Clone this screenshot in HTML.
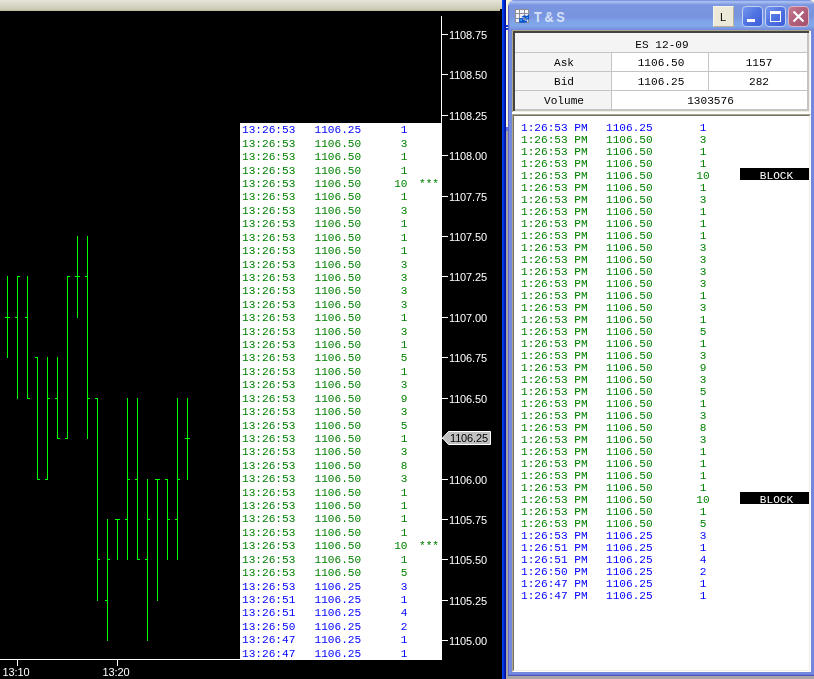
<!DOCTYPE html>
<html><head><meta charset="utf-8"><title>T &amp; S</title>
<style>
html,body{margin:0;padding:0}
body{width:814px;height:679px;position:relative;overflow:hidden;background:#000;font-family:"Liberation Sans",sans-serif}
div,span{position:absolute;box-sizing:border-box}
.m{font-family:"Liberation Mono",monospace;font-size:11.11px;white-space:pre;letter-spacing:0}
.m,.ax,.t{will-change:transform}
.b{color:#0000ff}.g{color:#008000}.k{color:#000}
.ax{font-family:"Liberation Sans",sans-serif;font-size:11px;color:#fff;white-space:pre;line-height:12px;height:12px;letter-spacing:-0.15px}
.lr{left:0;width:202px;height:14px;line-height:14px}
.rr{left:0;width:296px;height:12px;line-height:12px}
.blk{background:#000;color:#fff;left:227px;width:69px;height:12px;top:0;text-align:center;line-height:16px;padding-left:4px;overflow:hidden}
</style></head><body>

<div style="left:0;top:0;width:502px;height:11px;background:linear-gradient(#e6e4d9 0,#e2dfd2 2px,#d9d6c6 5px,#cfccb8 8px,#c9c6ae 10px,#b6b28c 11px)"></div>
<div style="left:500px;top:9px;width:2px;height:2px;background:#000"></div>
<div style="left:240px;top:123px;width:202px;height:537px;background:#fff">
<div class="lr m b" style="top:0px"><span style="left:2px">13:26:53</span><span style="left:74.5px">1106.25</span><span style="right:34.5px">1</span></div>
<div class="lr m g" style="top:14px"><span style="left:2px">13:26:53</span><span style="left:74.5px">1106.50</span><span style="right:34.5px">3</span></div>
<div class="lr m g" style="top:27px"><span style="left:2px">13:26:53</span><span style="left:74.5px">1106.50</span><span style="right:34.5px">1</span></div>
<div class="lr m g" style="top:41px"><span style="left:2px">13:26:53</span><span style="left:74.5px">1106.50</span><span style="right:34.5px">1</span></div>
<div class="lr m g" style="top:54px"><span style="left:2px">13:26:53</span><span style="left:74.5px">1106.50</span><span style="right:34.5px">10</span><span style="left:179px">***</span></div>
<div class="lr m g" style="top:67px"><span style="left:2px">13:26:53</span><span style="left:74.5px">1106.50</span><span style="right:34.5px">1</span></div>
<div class="lr m g" style="top:81px"><span style="left:2px">13:26:53</span><span style="left:74.5px">1106.50</span><span style="right:34.5px">3</span></div>
<div class="lr m g" style="top:94px"><span style="left:2px">13:26:53</span><span style="left:74.5px">1106.50</span><span style="right:34.5px">1</span></div>
<div class="lr m g" style="top:108px"><span style="left:2px">13:26:53</span><span style="left:74.5px">1106.50</span><span style="right:34.5px">1</span></div>
<div class="lr m g" style="top:121px"><span style="left:2px">13:26:53</span><span style="left:74.5px">1106.50</span><span style="right:34.5px">1</span></div>
<div class="lr m g" style="top:135px"><span style="left:2px">13:26:53</span><span style="left:74.5px">1106.50</span><span style="right:34.5px">3</span></div>
<div class="lr m g" style="top:148px"><span style="left:2px">13:26:53</span><span style="left:74.5px">1106.50</span><span style="right:34.5px">3</span></div>
<div class="lr m g" style="top:161px"><span style="left:2px">13:26:53</span><span style="left:74.5px">1106.50</span><span style="right:34.5px">3</span></div>
<div class="lr m g" style="top:175px"><span style="left:2px">13:26:53</span><span style="left:74.5px">1106.50</span><span style="right:34.5px">3</span></div>
<div class="lr m g" style="top:188px"><span style="left:2px">13:26:53</span><span style="left:74.5px">1106.50</span><span style="right:34.5px">1</span></div>
<div class="lr m g" style="top:202px"><span style="left:2px">13:26:53</span><span style="left:74.5px">1106.50</span><span style="right:34.5px">3</span></div>
<div class="lr m g" style="top:215px"><span style="left:2px">13:26:53</span><span style="left:74.5px">1106.50</span><span style="right:34.5px">1</span></div>
<div class="lr m g" style="top:228px"><span style="left:2px">13:26:53</span><span style="left:74.5px">1106.50</span><span style="right:34.5px">5</span></div>
<div class="lr m g" style="top:242px"><span style="left:2px">13:26:53</span><span style="left:74.5px">1106.50</span><span style="right:34.5px">1</span></div>
<div class="lr m g" style="top:255px"><span style="left:2px">13:26:53</span><span style="left:74.5px">1106.50</span><span style="right:34.5px">3</span></div>
<div class="lr m g" style="top:269px"><span style="left:2px">13:26:53</span><span style="left:74.5px">1106.50</span><span style="right:34.5px">9</span></div>
<div class="lr m g" style="top:282px"><span style="left:2px">13:26:53</span><span style="left:74.5px">1106.50</span><span style="right:34.5px">3</span></div>
<div class="lr m g" style="top:296px"><span style="left:2px">13:26:53</span><span style="left:74.5px">1106.50</span><span style="right:34.5px">5</span></div>
<div class="lr m g" style="top:309px"><span style="left:2px">13:26:53</span><span style="left:74.5px">1106.50</span><span style="right:34.5px">1</span></div>
<div class="lr m g" style="top:322px"><span style="left:2px">13:26:53</span><span style="left:74.5px">1106.50</span><span style="right:34.5px">3</span></div>
<div class="lr m g" style="top:336px"><span style="left:2px">13:26:53</span><span style="left:74.5px">1106.50</span><span style="right:34.5px">8</span></div>
<div class="lr m g" style="top:349px"><span style="left:2px">13:26:53</span><span style="left:74.5px">1106.50</span><span style="right:34.5px">3</span></div>
<div class="lr m g" style="top:363px"><span style="left:2px">13:26:53</span><span style="left:74.5px">1106.50</span><span style="right:34.5px">1</span></div>
<div class="lr m g" style="top:376px"><span style="left:2px">13:26:53</span><span style="left:74.5px">1106.50</span><span style="right:34.5px">1</span></div>
<div class="lr m g" style="top:389px"><span style="left:2px">13:26:53</span><span style="left:74.5px">1106.50</span><span style="right:34.5px">1</span></div>
<div class="lr m g" style="top:403px"><span style="left:2px">13:26:53</span><span style="left:74.5px">1106.50</span><span style="right:34.5px">1</span></div>
<div class="lr m g" style="top:416px"><span style="left:2px">13:26:53</span><span style="left:74.5px">1106.50</span><span style="right:34.5px">10</span><span style="left:179px">***</span></div>
<div class="lr m g" style="top:430px"><span style="left:2px">13:26:53</span><span style="left:74.5px">1106.50</span><span style="right:34.5px">1</span></div>
<div class="lr m g" style="top:443px"><span style="left:2px">13:26:53</span><span style="left:74.5px">1106.50</span><span style="right:34.5px">5</span></div>
<div class="lr m b" style="top:457px"><span style="left:2px">13:26:53</span><span style="left:74.5px">1106.25</span><span style="right:34.5px">3</span></div>
<div class="lr m b" style="top:470px"><span style="left:2px">13:26:51</span><span style="left:74.5px">1106.25</span><span style="right:34.5px">1</span></div>
<div class="lr m b" style="top:483px"><span style="left:2px">13:26:51</span><span style="left:74.5px">1106.25</span><span style="right:34.5px">4</span></div>
<div class="lr m b" style="top:497px"><span style="left:2px">13:26:50</span><span style="left:74.5px">1106.25</span><span style="right:34.5px">2</span></div>
<div class="lr m b" style="top:510px"><span style="left:2px">13:26:47</span><span style="left:74.5px">1106.25</span><span style="right:34.5px">1</span></div>
<div class="lr m b" style="top:524px"><span style="left:2px">13:26:47</span><span style="left:74.5px">1106.25</span><span style="right:34.5px">1</span></div>
</div>
<div style="left:441px;top:16px;width:1px;height:644px;background:#fff"></div>
<div style="left:0;top:659px;width:442px;height:1px;background:#fff"></div>
<div style="left:17px;top:659px;width:1px;height:7px;background:#fff"></div>
<div class="ax" style="left:-4px;top:666px;width:40px;text-align:center">13:10</div>
<div style="left:117px;top:659px;width:1px;height:7px;background:#fff"></div>
<div class="ax" style="left:96px;top:666px;width:40px;text-align:center">13:20</div>
<div style="left:442px;top:34px;width:6px;height:1px;background:#fff"></div>
<div class="ax" style="left:449px;top:29px">1108.75</div>
<div style="left:442px;top:74px;width:6px;height:1px;background:#fff"></div>
<div class="ax" style="left:449px;top:69px">1108.50</div>
<div style="left:442px;top:115px;width:6px;height:1px;background:#fff"></div>
<div class="ax" style="left:449px;top:110px">1108.25</div>
<div style="left:442px;top:155px;width:6px;height:1px;background:#fff"></div>
<div class="ax" style="left:449px;top:150px">1108.00</div>
<div style="left:442px;top:196px;width:6px;height:1px;background:#fff"></div>
<div class="ax" style="left:449px;top:191px">1107.75</div>
<div style="left:442px;top:236px;width:6px;height:1px;background:#fff"></div>
<div class="ax" style="left:449px;top:231px">1107.50</div>
<div style="left:442px;top:276px;width:6px;height:1px;background:#fff"></div>
<div class="ax" style="left:449px;top:271px">1107.25</div>
<div style="left:442px;top:317px;width:6px;height:1px;background:#fff"></div>
<div class="ax" style="left:449px;top:312px">1107.00</div>
<div style="left:442px;top:357px;width:6px;height:1px;background:#fff"></div>
<div class="ax" style="left:449px;top:352px">1106.75</div>
<div style="left:442px;top:398px;width:6px;height:1px;background:#fff"></div>
<div class="ax" style="left:449px;top:393px">1106.50</div>
<div style="left:442px;top:438px;width:6px;height:1px;background:#fff"></div>
<div style="left:442px;top:479px;width:6px;height:1px;background:#fff"></div>
<div class="ax" style="left:449px;top:474px">1106.00</div>
<div style="left:442px;top:519px;width:6px;height:1px;background:#fff"></div>
<div class="ax" style="left:449px;top:514px">1105.75</div>
<div style="left:442px;top:559px;width:6px;height:1px;background:#fff"></div>
<div class="ax" style="left:449px;top:554px">1105.50</div>
<div style="left:442px;top:600px;width:6px;height:1px;background:#fff"></div>
<div class="ax" style="left:449px;top:595px">1105.25</div>
<div style="left:442px;top:640px;width:6px;height:1px;background:#fff"></div>
<div class="ax" style="left:449px;top:635px">1105.00</div>
<svg style="position:absolute;left:441px;top:430px" width="52" height="17" viewBox="0 0 52 17"><path d="M1.5 8 L7.5 1.5 H49.5 V14.5 H7.5 Z" fill="#c0c0c0" stroke="#fff" stroke-width="1"/></svg>
<div class="ax" style="left:450px;top:432px;color:#000">1106.25</div>
<svg style="position:absolute;left:0;top:0" width="240" height="660" shape-rendering="crispEdges" fill="#00ff00">
<rect x="7" y="276" width="1" height="82"/><rect x="5" y="317" width="2" height="1"/><rect x="8" y="317" width="2" height="1"/>
<rect x="17" y="276" width="1" height="123"/><rect x="15" y="317" width="2" height="1"/><rect x="18" y="276" width="2" height="1"/>
<rect x="27" y="276" width="1" height="123"/><rect x="25" y="317" width="2" height="1"/><rect x="28" y="398" width="2" height="1"/>
<rect x="37" y="357" width="1" height="123"/><rect x="35" y="357" width="2" height="1"/><rect x="38" y="479" width="2" height="1"/>
<rect x="47" y="357" width="1" height="123"/><rect x="45" y="479" width="2" height="1"/><rect x="48" y="398" width="2" height="1"/>
<rect x="57" y="357" width="1" height="82"/><rect x="55" y="398" width="2" height="1"/><rect x="58" y="438" width="2" height="1"/>
<rect x="67" y="276" width="1" height="163"/><rect x="65" y="438" width="2" height="1"/><rect x="68" y="276" width="2" height="1"/>
<rect x="77" y="236" width="1" height="82"/><rect x="75" y="276" width="2" height="1"/><rect x="78" y="276" width="2" height="1"/>
<rect x="87" y="236" width="1" height="203"/><rect x="85" y="276" width="2" height="1"/><rect x="88" y="398" width="2" height="1"/>
<rect x="97" y="398" width="1" height="203"/><rect x="95" y="398" width="2" height="1"/><rect x="98" y="559" width="2" height="1"/>
<rect x="107" y="519" width="1" height="122"/><rect x="105" y="600" width="2" height="1"/><rect x="108" y="559" width="2" height="1"/>
<rect x="117" y="519" width="1" height="41"/><rect x="115" y="519" width="2" height="1"/><rect x="118" y="519" width="2" height="1"/>
<rect x="127" y="398" width="1" height="162"/><rect x="125" y="519" width="2" height="1"/><rect x="128" y="479" width="2" height="1"/>
<rect x="137" y="398" width="1" height="162"/><rect x="135" y="479" width="2" height="1"/><rect x="138" y="559" width="2" height="1"/>
<rect x="147" y="479" width="1" height="162"/><rect x="145" y="559" width="2" height="1"/><rect x="148" y="519" width="2" height="1"/>
<rect x="157" y="479" width="1" height="122"/><rect x="155" y="479" width="2" height="1"/><rect x="158" y="479" width="2" height="1"/>
<rect x="167" y="479" width="1" height="81"/><rect x="165" y="479" width="2" height="1"/><rect x="168" y="519" width="2" height="1"/>
<rect x="177" y="398" width="1" height="162"/><rect x="175" y="519" width="2" height="1"/><rect x="178" y="479" width="2" height="1"/>
<rect x="187" y="398" width="1" height="82"/><rect x="185" y="438" width="2" height="1"/><rect x="188" y="438" width="2" height="1"/>
</svg>
<div style="left:502px;top:0;width:4px;height:679px;background:linear-gradient(90deg,#0046f5 0,#0040ee 1px,#0028cc 2px,#0014a8 3px,#000c90 4px)"></div>
<div style="left:506px;top:0;width:2px;height:679px;background:#a9a79e"></div>
<div style="left:506px;top:0;width:2px;height:127px;background:#fdf7d9"></div>
<div style="left:506px;top:25px;width:2px;height:2px;background:#0a3cd8"></div>
<div style="left:506px;top:28px;width:2px;height:2px;background:#0a3cd8"></div>
<div style="left:506px;top:127px;width:2px;height:4px;background:#6070d8"></div>
<div style="left:506px;top:676px;width:308px;height:3px;background:#a7a7a7"></div>
<div style="left:508px;top:0;width:306px;height:8px;background:#f3eed6"></div>
<div style="left:508px;top:0;width:306px;height:679px;overflow:hidden">
<div id="win" style="left:0;top:0;width:307px;height:676px;background:#7288dd;border-radius:7px 7px 0 0;overflow:hidden">
<div style="left:0;top:0;width:310px;height:30px;background:linear-gradient(#7089de 0,#8fa8e8 1px,#a4bbf0 1.5px,#a2b9ef 2.5px,#86a0e5 4px,#7b96e0 5.5px,#7994df 17px,#7d9fe6 20px,#80a6ea 23px,#80a7ea 26px,#7c98e2 28px,#7489dc 30px)"></div>
<div style="left:0;top:6px;width:1px;height:670px;background:#5a68d2"></div>
<div style="left:1px;top:6px;width:1px;height:670px;background:#7a8be0"></div>
<div style="left:0;top:675px;width:310px;height:1px;background:#4c56c0"></div>
<div style="left:0;top:674px;width:310px;height:1px;background:#6a7cd8"></div>
<svg style="position:absolute;left:7px;top:9px" width="14" height="14" viewBox="0 0 14 14" shape-rendering="crispEdges">
<rect x="0" y="0" width="14" height="14" fill="#8f8f8f"/>
<rect x="1" y="1" width="3" height="3" fill="#f6f6ff"/><rect x="5" y="1" width="4" height="3" fill="#f0f0ff"/><rect x="10" y="1" width="3" height="3" fill="#f6f6ff"/>
<rect x="1" y="5" width="3" height="4" fill="#f0f0ff"/><rect x="5" y="5" width="4" height="4" fill="#f0f0ff"/><rect x="10" y="5" width="3" height="4" fill="#f0f0ff"/>
<rect x="1" y="10" width="3" height="3" fill="#f0f0ff"/><rect x="5" y="10" width="4" height="3" fill="#f0f0ff"/><rect x="10" y="10" width="3" height="3" fill="#f0f0ff"/>
<g shape-rendering="auto"><path d="M4.2 9.2 H8.9 L8.3 10.5 C9.4 11.7 11 11.9 12.1 11.3 L12.3 13 C10 13.9 8 13.8 4.2 13.8 Z" fill="#0a55d8"/>
<path d="M6.2 8.3 C7.6 6.5 9.8 6.1 11.7 7 L14.2 5.5 V10.5 L10.1 10.7 L11 9.3 C9.6 8.4 8 8.2 6.2 8.3 Z" fill="#0a50d0"/>
<rect x="5.2" y="10.2" width="1.8" height="1.8" fill="#3aa0f6"/><rect x="11.4" y="8" width="1.6" height="1.6" fill="#3aa0f6"/></g>
</svg>
<div style="left:26px;top:8px;height:18px;line-height:18px;font-weight:bold;font-size:14px;color:#d6e1f7;white-space:pre;letter-spacing:-0.4px;transform:scaleX(0.9);transform-origin:0 0">T &amp; S</div>
<div style="left:205px;top:6px;width:21px;height:21px;background:#ece9d8;border:1px solid;border-color:#f7f5ea #b9b19a #b9b19a #f7f5ea"></div>
<div style="left:205px;top:6px;width:21px;height:21px;text-align:center;line-height:23px;font-size:11px;color:#000;padding-right:1px" class="t">L</div>
<div style="left:234px;top:6px;width:21px;height:21px;border:1px solid #c3cff3;border-radius:4px;background:linear-gradient(135deg,#7596ec 0,#4f73e2 50%,#3c5cd8 100%)"></div>
<div style="left:239px;top:19px;width:8px;height:3px;background:#fff"></div>
<div style="left:257px;top:6px;width:21px;height:21px;border:1px solid #c3cff3;border-radius:4px;background:linear-gradient(135deg,#7596ec 0,#4f73e2 50%,#3c5cd8 100%)"></div>
<div style="left:262px;top:11px;width:11px;height:11px;border:1px solid #fff;border-top-width:3px"></div>
<div style="left:280px;top:6px;width:21px;height:21px;border:1px solid #dcb4c6;border-radius:4px;background:linear-gradient(135deg,#c47a90 0,#b0607a 50%,#a4506e 100%)"></div>
<svg style="position:absolute;left:284px;top:10px" width="13" height="13" viewBox="0 0 13 13"><path d="M1.5 1.5 L11.5 11.5 M11.5 1.5 L1.5 11.5" stroke="#fff" stroke-width="2.2" stroke-linecap="butt"/></svg>
<div style="left:4px;top:30px;width:299px;height:84px;background:#fff">
<div style="left:0;top:0;width:299px;height:1px;background:#aca58a"></div><div style="left:0;top:0;width:1px;height:82px;background:#aca58a"></div>
<div style="left:1px;top:1px;width:297px;height:2px;background:#45453f"></div><div style="left:1px;top:1px;width:2px;height:80px;background:#45453f"></div>
<div style="left:1px;top:81px;width:297px;height:1px;background:#f1efe2"></div><div style="left:297px;top:1px;width:1px;height:81px;background:#f1efe2"></div>
<div style="left:3px;top:3px;width:294px;height:78px;background:#c4c4c4">
<div class="m k" style="left:0px;top:0px;width:292px;height:19px;background:#f4f4f4;text-align:center;line-height:24px;padding-left:2px">ES 12-09</div>
<div class="m k" style="left:0px;top:20px;width:96px;height:18px;background:#f4f4f4;text-align:center;line-height:21px;padding-left:2px">Ask</div>
<div class="m k" style="left:97px;top:20px;width:96px;height:18px;background:#fff;text-align:center;line-height:21px;padding-left:2px">1106.50</div>
<div class="m k" style="left:194px;top:20px;width:98px;height:18px;background:#fff;text-align:center;line-height:21px;padding-left:2px">1157</div>
<div class="m k" style="left:0px;top:39px;width:96px;height:18px;background:#f4f4f4;text-align:center;line-height:21px;padding-left:2px">Bid</div>
<div class="m k" style="left:97px;top:39px;width:96px;height:18px;background:#fff;text-align:center;line-height:21px;padding-left:2px">1106.25</div>
<div class="m k" style="left:194px;top:39px;width:98px;height:18px;background:#fff;text-align:center;line-height:21px;padding-left:2px">282</div>
<div class="m k" style="left:0px;top:58px;width:96px;height:18px;background:#f4f4f4;text-align:center;line-height:21px;padding-left:2px">Volume</div>
<div class="m k" style="left:97px;top:58px;width:195px;height:18px;background:#fff;text-align:center;line-height:21px;padding-left:2px">1303576</div>
</div>
</div>
<div style="left:4px;top:114px;width:299px;height:558px;background:#fff;border:1px solid;border-color:#aca58a #fff #fff #aca58a">
<div style="left:0;top:0;width:297px;height:556px;border:1px solid;border-color:#716f64 #f1efe2 #f1efe2 #716f64"></div>
<div class="rr m b" style="top:5px"><span style="left:8px;top:2px">1:26:53 PM</span><span style="left:93px;top:2px">1106.25</span><span style="left:170px;top:2px;width:40px;text-align:center">1</span></div>
<div class="rr m g" style="top:17px"><span style="left:8px;top:2px">1:26:53 PM</span><span style="left:93px;top:2px">1106.50</span><span style="left:170px;top:2px;width:40px;text-align:center">3</span></div>
<div class="rr m g" style="top:29px"><span style="left:8px;top:2px">1:26:53 PM</span><span style="left:93px;top:2px">1106.50</span><span style="left:170px;top:2px;width:40px;text-align:center">1</span></div>
<div class="rr m g" style="top:41px"><span style="left:8px;top:2px">1:26:53 PM</span><span style="left:93px;top:2px">1106.50</span><span style="left:170px;top:2px;width:40px;text-align:center">1</span></div>
<div class="rr m g" style="top:53px"><span style="left:8px;top:2px">1:26:53 PM</span><span style="left:93px;top:2px">1106.50</span><span style="left:170px;top:2px;width:40px;text-align:center">10</span><span class="blk">BLOCK</span></div>
<div class="rr m g" style="top:65px"><span style="left:8px;top:2px">1:26:53 PM</span><span style="left:93px;top:2px">1106.50</span><span style="left:170px;top:2px;width:40px;text-align:center">1</span></div>
<div class="rr m g" style="top:77px"><span style="left:8px;top:2px">1:26:53 PM</span><span style="left:93px;top:2px">1106.50</span><span style="left:170px;top:2px;width:40px;text-align:center">3</span></div>
<div class="rr m g" style="top:89px"><span style="left:8px;top:2px">1:26:53 PM</span><span style="left:93px;top:2px">1106.50</span><span style="left:170px;top:2px;width:40px;text-align:center">1</span></div>
<div class="rr m g" style="top:101px"><span style="left:8px;top:2px">1:26:53 PM</span><span style="left:93px;top:2px">1106.50</span><span style="left:170px;top:2px;width:40px;text-align:center">1</span></div>
<div class="rr m g" style="top:113px"><span style="left:8px;top:2px">1:26:53 PM</span><span style="left:93px;top:2px">1106.50</span><span style="left:170px;top:2px;width:40px;text-align:center">1</span></div>
<div class="rr m g" style="top:125px"><span style="left:8px;top:2px">1:26:53 PM</span><span style="left:93px;top:2px">1106.50</span><span style="left:170px;top:2px;width:40px;text-align:center">3</span></div>
<div class="rr m g" style="top:137px"><span style="left:8px;top:2px">1:26:53 PM</span><span style="left:93px;top:2px">1106.50</span><span style="left:170px;top:2px;width:40px;text-align:center">3</span></div>
<div class="rr m g" style="top:149px"><span style="left:8px;top:2px">1:26:53 PM</span><span style="left:93px;top:2px">1106.50</span><span style="left:170px;top:2px;width:40px;text-align:center">3</span></div>
<div class="rr m g" style="top:161px"><span style="left:8px;top:2px">1:26:53 PM</span><span style="left:93px;top:2px">1106.50</span><span style="left:170px;top:2px;width:40px;text-align:center">3</span></div>
<div class="rr m g" style="top:173px"><span style="left:8px;top:2px">1:26:53 PM</span><span style="left:93px;top:2px">1106.50</span><span style="left:170px;top:2px;width:40px;text-align:center">1</span></div>
<div class="rr m g" style="top:185px"><span style="left:8px;top:2px">1:26:53 PM</span><span style="left:93px;top:2px">1106.50</span><span style="left:170px;top:2px;width:40px;text-align:center">3</span></div>
<div class="rr m g" style="top:197px"><span style="left:8px;top:2px">1:26:53 PM</span><span style="left:93px;top:2px">1106.50</span><span style="left:170px;top:2px;width:40px;text-align:center">1</span></div>
<div class="rr m g" style="top:209px"><span style="left:8px;top:2px">1:26:53 PM</span><span style="left:93px;top:2px">1106.50</span><span style="left:170px;top:2px;width:40px;text-align:center">5</span></div>
<div class="rr m g" style="top:221px"><span style="left:8px;top:2px">1:26:53 PM</span><span style="left:93px;top:2px">1106.50</span><span style="left:170px;top:2px;width:40px;text-align:center">1</span></div>
<div class="rr m g" style="top:233px"><span style="left:8px;top:2px">1:26:53 PM</span><span style="left:93px;top:2px">1106.50</span><span style="left:170px;top:2px;width:40px;text-align:center">3</span></div>
<div class="rr m g" style="top:245px"><span style="left:8px;top:2px">1:26:53 PM</span><span style="left:93px;top:2px">1106.50</span><span style="left:170px;top:2px;width:40px;text-align:center">9</span></div>
<div class="rr m g" style="top:257px"><span style="left:8px;top:2px">1:26:53 PM</span><span style="left:93px;top:2px">1106.50</span><span style="left:170px;top:2px;width:40px;text-align:center">3</span></div>
<div class="rr m g" style="top:269px"><span style="left:8px;top:2px">1:26:53 PM</span><span style="left:93px;top:2px">1106.50</span><span style="left:170px;top:2px;width:40px;text-align:center">5</span></div>
<div class="rr m g" style="top:281px"><span style="left:8px;top:2px">1:26:53 PM</span><span style="left:93px;top:2px">1106.50</span><span style="left:170px;top:2px;width:40px;text-align:center">1</span></div>
<div class="rr m g" style="top:293px"><span style="left:8px;top:2px">1:26:53 PM</span><span style="left:93px;top:2px">1106.50</span><span style="left:170px;top:2px;width:40px;text-align:center">3</span></div>
<div class="rr m g" style="top:305px"><span style="left:8px;top:2px">1:26:53 PM</span><span style="left:93px;top:2px">1106.50</span><span style="left:170px;top:2px;width:40px;text-align:center">8</span></div>
<div class="rr m g" style="top:317px"><span style="left:8px;top:2px">1:26:53 PM</span><span style="left:93px;top:2px">1106.50</span><span style="left:170px;top:2px;width:40px;text-align:center">3</span></div>
<div class="rr m g" style="top:329px"><span style="left:8px;top:2px">1:26:53 PM</span><span style="left:93px;top:2px">1106.50</span><span style="left:170px;top:2px;width:40px;text-align:center">1</span></div>
<div class="rr m g" style="top:341px"><span style="left:8px;top:2px">1:26:53 PM</span><span style="left:93px;top:2px">1106.50</span><span style="left:170px;top:2px;width:40px;text-align:center">1</span></div>
<div class="rr m g" style="top:353px"><span style="left:8px;top:2px">1:26:53 PM</span><span style="left:93px;top:2px">1106.50</span><span style="left:170px;top:2px;width:40px;text-align:center">1</span></div>
<div class="rr m g" style="top:365px"><span style="left:8px;top:2px">1:26:53 PM</span><span style="left:93px;top:2px">1106.50</span><span style="left:170px;top:2px;width:40px;text-align:center">1</span></div>
<div class="rr m g" style="top:377px"><span style="left:8px;top:2px">1:26:53 PM</span><span style="left:93px;top:2px">1106.50</span><span style="left:170px;top:2px;width:40px;text-align:center">10</span><span class="blk">BLOCK</span></div>
<div class="rr m g" style="top:389px"><span style="left:8px;top:2px">1:26:53 PM</span><span style="left:93px;top:2px">1106.50</span><span style="left:170px;top:2px;width:40px;text-align:center">1</span></div>
<div class="rr m g" style="top:401px"><span style="left:8px;top:2px">1:26:53 PM</span><span style="left:93px;top:2px">1106.50</span><span style="left:170px;top:2px;width:40px;text-align:center">5</span></div>
<div class="rr m b" style="top:413px"><span style="left:8px;top:2px">1:26:53 PM</span><span style="left:93px;top:2px">1106.25</span><span style="left:170px;top:2px;width:40px;text-align:center">3</span></div>
<div class="rr m b" style="top:425px"><span style="left:8px;top:2px">1:26:51 PM</span><span style="left:93px;top:2px">1106.25</span><span style="left:170px;top:2px;width:40px;text-align:center">1</span></div>
<div class="rr m b" style="top:437px"><span style="left:8px;top:2px">1:26:51 PM</span><span style="left:93px;top:2px">1106.25</span><span style="left:170px;top:2px;width:40px;text-align:center">4</span></div>
<div class="rr m b" style="top:449px"><span style="left:8px;top:2px">1:26:50 PM</span><span style="left:93px;top:2px">1106.25</span><span style="left:170px;top:2px;width:40px;text-align:center">2</span></div>
<div class="rr m b" style="top:461px"><span style="left:8px;top:2px">1:26:47 PM</span><span style="left:93px;top:2px">1106.25</span><span style="left:170px;top:2px;width:40px;text-align:center">1</span></div>
<div class="rr m b" style="top:473px"><span style="left:8px;top:2px">1:26:47 PM</span><span style="left:93px;top:2px">1106.25</span><span style="left:170px;top:2px;width:40px;text-align:center">1</span></div>
</div>
</div></div>
</body></html>
